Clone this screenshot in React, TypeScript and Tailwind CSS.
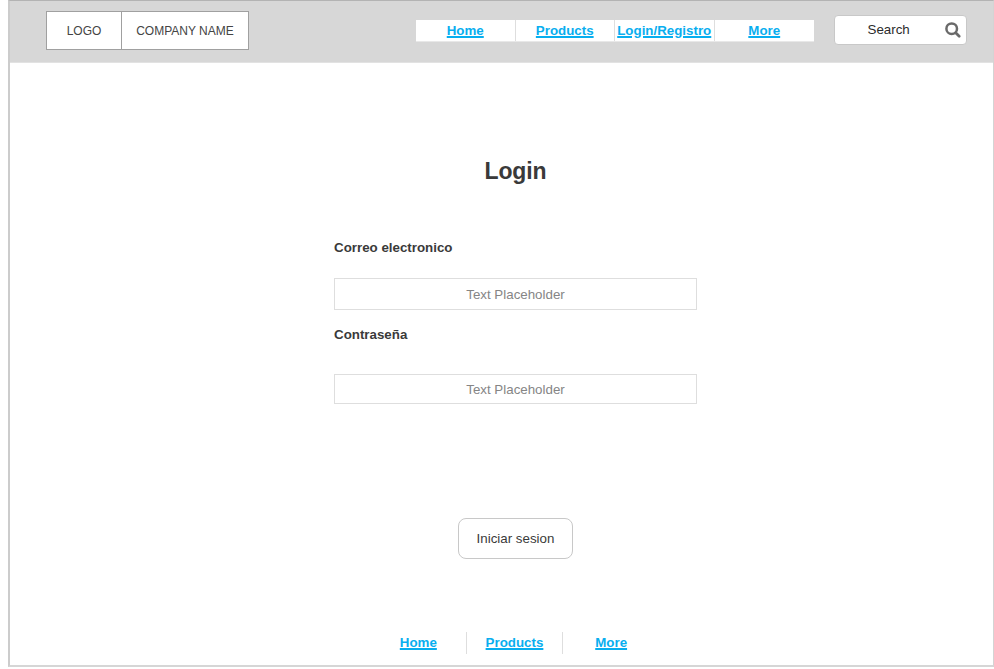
const headerLinks = ['Home', 'Products', 'Login/Registro', 'More'];

function Link({ children }: { children: string }) {
  return (
    <a href="#" className="font-bold text-[#08aeef] underline decoration-[1.5px] underline-offset-[1px]">
      {children}
    </a>
  );
}

function Header() {
  return (
    <header className="flex h-[62px] items-start border-b border-[#e2e2e2] bg-[#d7d7d7] pl-[36px]">
      <div className="mt-[10px] flex h-[39px] w-[203px] border border-[#a0a0a0] bg-white text-[12px] text-[#444]">
        <div className="flex w-[75px] items-center justify-center border-r border-[#a0a0a0]">LOGO</div>
        <div className="flex flex-1 items-center justify-center">COMPANY NAME</div>
      </div>
      <nav className="mt-[19px] ml-[167px] grid h-[22px] w-[398px] grid-cols-4 divide-x divide-[#dedede] border-b border-[#e8e8e8] bg-white">
        {headerLinks.map((label) => (
          <div key={label} className="flex items-center justify-center whitespace-nowrap">
            <Link>{label}</Link>
          </div>
        ))}
      </nav>
      <div className="mt-[14px] ml-[20px] flex h-[30px] w-[133px] items-center rounded-[4px] border border-[#c8c8c8] bg-white pl-[32.5px]">
        <span className="w-[77px] text-[#2b2b2b]">Search</span>
        <svg width="17" height="17" viewBox="0 0 17 17" fill="none" stroke="#6a6a6a" className="shrink-0">
          <circle cx="6.7" cy="6.7" r="5.3" strokeWidth="2.5" />
          <path d="M10.7 10.7 14.2 14.2" strokeWidth="2.8" strokeLinecap="round" />
        </svg>
      </div>
    </header>
  );
}

export default function App() {
  return (
    <div className="h-[669px] w-[994px] overflow-hidden bg-white pl-2 font-['Liberation_Sans',Arial,sans-serif] text-[13.33px] leading-4">
      <div className="h-[667px] border-t border-r border-b-2 border-l-2 border-t-[#b3b3b3] border-r-[#d4d4d4] border-b-[#d6d6d6] border-l-[#ccc]">
        <Header />
        <main className="ml-[324px] flex w-[363px] flex-col text-[#3a3a3a]">
          <h1 className="mt-[94px] text-center text-[23px] leading-7 font-bold tracking-[-0.1px]">Login</h1>
          <label className="mt-[55px] font-bold">Correo electronico</label>
          <input
            placeholder="Text Placeholder"
            className="mt-[22px] h-[32px] border border-[#dedede] text-center placeholder:text-[#858585]"
          />
          <label className="mt-[17px] font-bold">Contraseña</label>
          <input
            placeholder="Text Placeholder"
            className="mt-[31px] h-[30px] border border-[#dedede] text-center placeholder:text-[#858585]"
          />
          <button className="mt-[114px] h-[41px] w-[115px] self-center rounded-[8px] border border-[#c8c8c8]">
            Iniciar sesion
          </button>
        </main>
        <footer className="mt-[73px] ml-[360px] grid h-[22px] w-[290px] grid-cols-3 divide-x divide-[#dedede]">
          <div className="flex items-center justify-center pl-px"><Link>Home</Link></div>
          <div className="flex items-center justify-center"><Link>Products</Link></div>
          <div className="flex items-center justify-center pr-px"><Link>More</Link></div>
        </footer>
      </div>
    </div>
  );
}
